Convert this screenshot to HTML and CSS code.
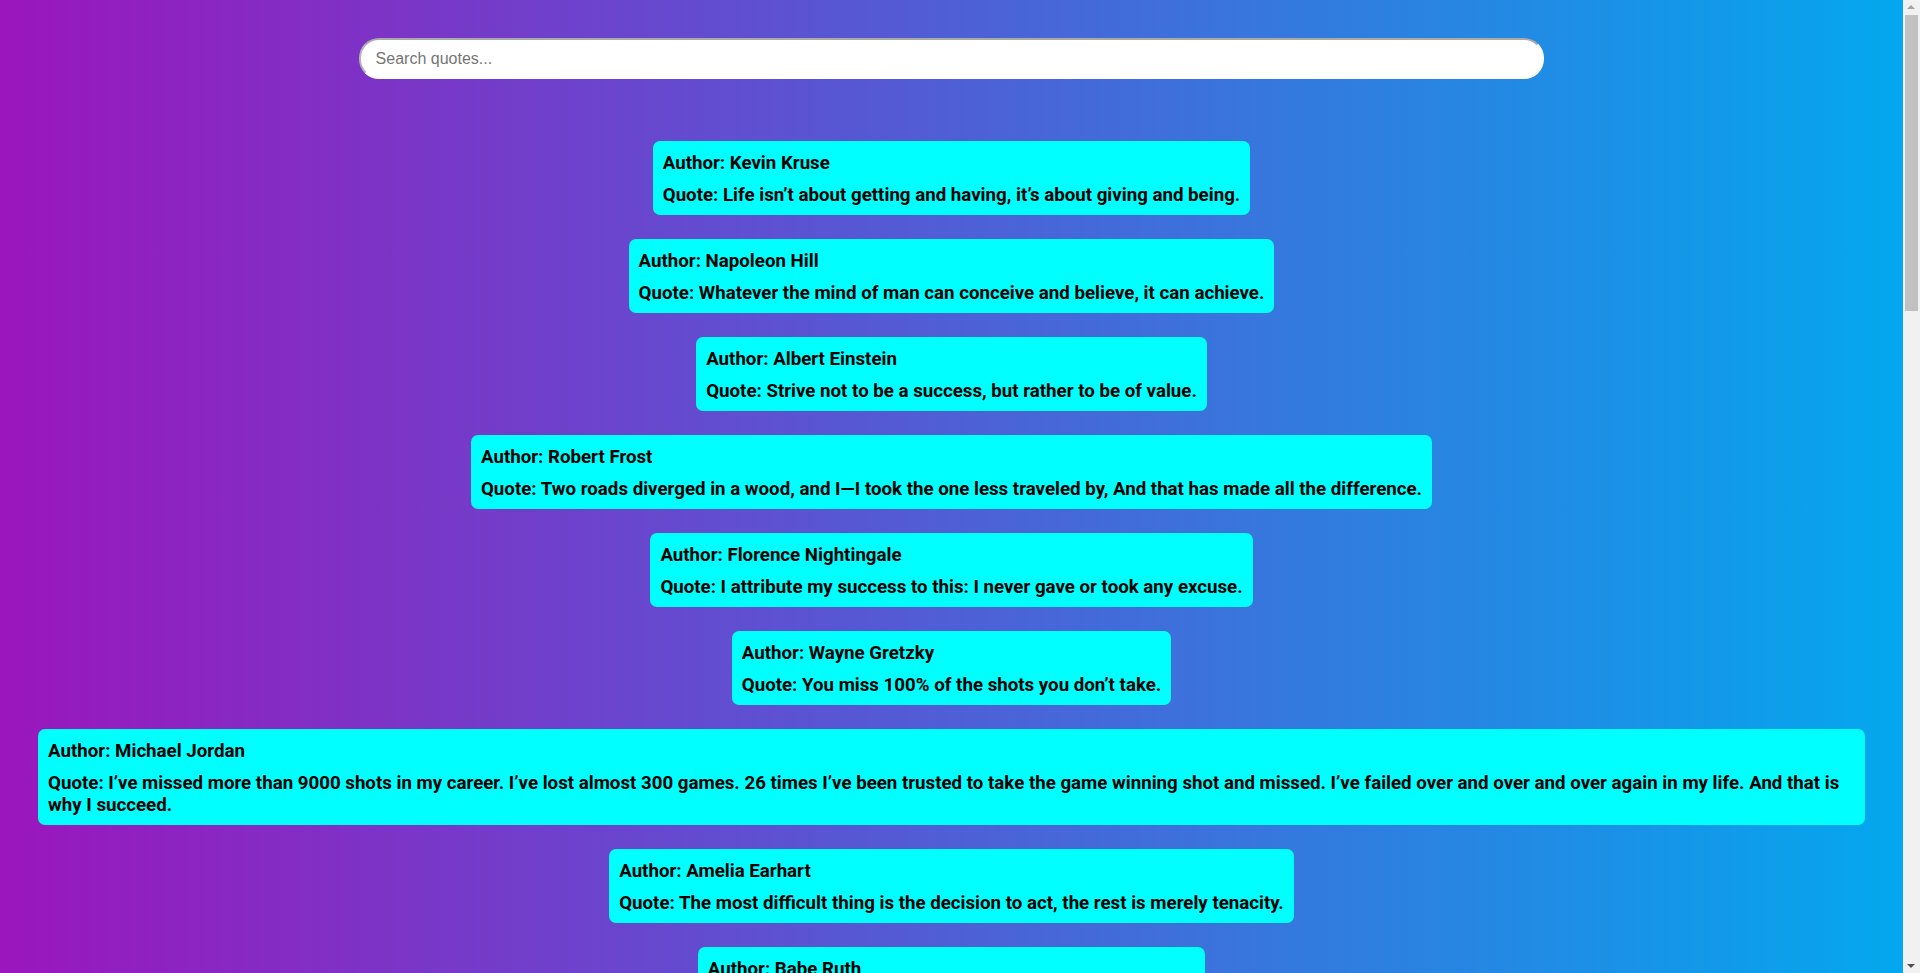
FILE: index.html
```html
<!DOCTYPE html>
<html lang="en">
<head>
<meta charset="utf-8">
<title>Quotes</title>
<link rel="stylesheet" href="styles.css">
</head>
<body>
<div class="page">
  <header class="search-bar">
    <input class="search-input" type="text" placeholder="Search quotes...">
  </header>
  <main class="quotes">
    <div class="quote-card"><p>Author: Kevin Kruse</p><p>Quote: Life isn’t about getting and having, it’s about giving and being.</p></div>
    <div class="quote-card"><p>Author: Napoleon Hill</p><p>Quote: Whatever the mind of man can conceive and believe, it can achieve.</p></div>
    <div class="quote-card"><p>Author: Albert Einstein</p><p>Quote: Strive not to be a success, but rather to be of value.</p></div>
    <div class="quote-card"><p>Author: Robert Frost</p><p>Quote: Two roads diverged in a wood, and I—I took the one less traveled by, And that has made all the difference.</p></div>
    <div class="quote-card"><p>Author: Florence Nightingale</p><p>Quote: I attribute my success to this: I never gave or took any excuse.</p></div>
    <div class="quote-card"><p>Author: Wayne Gretzky</p><p>Quote: You miss 100% of the shots you don’t take.</p></div>
    <div class="quote-card"><p>Author: Michael Jordan</p><p>Quote: I’ve missed more than 9000 shots in my career. I’ve lost almost 300 games. 26 times I’ve been trusted to take the game winning shot and missed. I’ve failed over and over and over again in my life. And that is why I succeed.</p></div>
    <div class="quote-card"><p>Author: Amelia Earhart</p><p>Quote: The most difficult thing is the decision to act, the rest is merely tenacity.</p></div>
    <div class="quote-card"><p>Author: Babe Ruth</p><p>Quote: Every strike brings me closer to the next home run.</p></div>
    <div class="quote-card"><p>Author: W. Clement Stone</p><p>Quote: Definiteness of purpose is the starting point of all achievement.</p></div>
    <div class="quote-card"><p>Author: John Lennon</p><p>Quote: Life is what happens to you while you’re busy making other plans.</p></div>
    <div class="quote-card"><p>Author: Earl Nightingale</p><p>Quote: We become what we think about.</p></div>
    <div class="quote-card"><p>Author: Mark Twain</p><p>Quote: Twenty years from now you will be more disappointed by the things that you didn’t do than by the ones you did do, so throw off the bowlines, sail away from safe harbor, catch the trade winds in your sails. Explore, Dream, Discover.</p></div>
    <div class="quote-card"><p>Author: Charles Swindoll</p><p>Quote: Life is 10% what happens to me and 90% of how I react to it.</p></div>
    <div class="quote-card"><p>Author: Alice Walker</p><p>Quote: The most common way people give up their power is by thinking they don’t have any.</p></div>
    <div class="quote-card"><p>Author: Buddha</p><p>Quote: The mind is everything. What you think you become.</p></div>
    <div class="quote-card"><p>Author: Chinese Proverb</p><p>Quote: The best time to plant a tree was 20 years ago. The second best time is now.</p></div>
    <div class="quote-card"><p>Author: Socrates</p><p>Quote: An unexamined life is not worth living.</p></div>
    <div class="quote-card"><p>Author: Woody Allen</p><p>Quote: Eighty percent of success is showing up.</p></div>
    <div class="quote-card"><p>Author: Steve Jobs</p><p>Quote: Your time is limited, so don’t waste it living someone else’s life.</p></div>
    <div class="quote-card"><p>Author: Vince Lombardi</p><p>Quote: Winning isn’t everything, but wanting to win is.</p></div>
    <div class="quote-card"><p>Author: Stephen Covey</p><p>Quote: I am not a product of my circumstances. I am a product of my decisions.</p></div>
    <div class="quote-card"><p>Author: Pablo Picasso</p><p>Quote: Every child is an artist. The problem is how to remain an artist once he grows up.</p></div>
    <div class="quote-card"><p>Author: Christopher Columbus</p><p>Quote: You can never cross the ocean until you have the courage to lose sight of the shore.</p></div>
    <div class="quote-card"><p>Author: Maya Angelou</p><p>Quote: I’ve learned that people will forget what you said, people will forget what you did, but people will never forget how you made them feel.</p></div>
    <div class="quote-card"><p>Author: Jim Rohn</p><p>Quote: Either you run the day, or the day runs you.</p></div>
    <div class="quote-card"><p>Author: Henry Ford</p><p>Quote: Whether you think you can or you think you can’t, you’re right.</p></div>
    <div class="quote-card"><p>Author: Mark Twain</p><p>Quote: The two most important days in your life are the day you are born and the day you find out why.</p></div>
    <div class="quote-card"><p>Author: Nelson Mandela</p><p>Quote: It always seems impossible until it’s done.</p></div>
    <div class="quote-card"><p>Author: Theodore Roosevelt</p><p>Quote: Believe you can and you’re halfway there.</p></div>
  </main>
</div>
<div class="scrollbar" aria-hidden="true">
  <span class="scroll-arrow scroll-arrow-up"></span>
  <span class="scroll-thumb"></span>
  <span class="scroll-arrow scroll-arrow-down"></span>
</div>
</body>
</html>
```
FILE: styles.css
```css
html, body {
  margin: 0;
  padding: 0;
}

body {
  min-height: 100vh;
  background: linear-gradient(to right, #9b16bd, #02a9ee);
  background-attachment: fixed;
  font-family: Roboto, "Liberation Sans", Arial, sans-serif;
}

.page {
  margin-right: 17px;
  padding-bottom: 24px;
}

.search-bar {
  display: flex;
  justify-content: center;
  padding-top: 38px;
}

.search-input {
  box-sizing: border-box;
  width: calc(60% + 44px);
  height: 41px;
  padding: 0 15px;
  border-width: 2px;
  border-style: solid;
  border-color: #a9a9a9 #ffffff #ffffff #b4b4b4;
  border-radius: 20px;
  background: #ffffff;
  font-family: "Liberation Sans", Arial, sans-serif;
  font-size: 16px;
  color: #222;
  outline: none;
}

.search-input::placeholder {
  color: #757575;
}

.quotes {
  display: flex;
  flex-direction: column;
  align-items: center;
  gap: 24px;
  margin-top: 62px;
}

.quote-card {
  box-sizing: border-box;
  max-width: 96%;
  padding: 11px 10px 9px;
  border-radius: 7px;
  background: #00ffff;
  color: #000;
  font-weight: 700;
  font-size: 18.7px;
  line-height: 22px;
}

.quote-card p {
  margin: 0;
}

.quote-card p + p {
  margin-top: 10px;
}

.scrollbar {
  position: fixed;
  top: 0;
  right: 0;
  bottom: 0;
  width: 17px;
  background: #f1f1f1;
}

.scroll-thumb {
  position: absolute;
  top: 15px;
  left: 2px;
  width: 13px;
  height: 296px;
  background: #c1c1c1;
}

.scroll-arrow {
  position: absolute;
  left: 4px;
  width: 0;
  height: 0;
  border-left: 4.5px solid transparent;
  border-right: 4.5px solid transparent;
}

.scroll-arrow-up {
  top: 5px;
  border-bottom: 4px solid #a3a3a3;
}

.scroll-arrow-down {
  bottom: 5px;
  border-top: 4px solid #505050;
}
```
